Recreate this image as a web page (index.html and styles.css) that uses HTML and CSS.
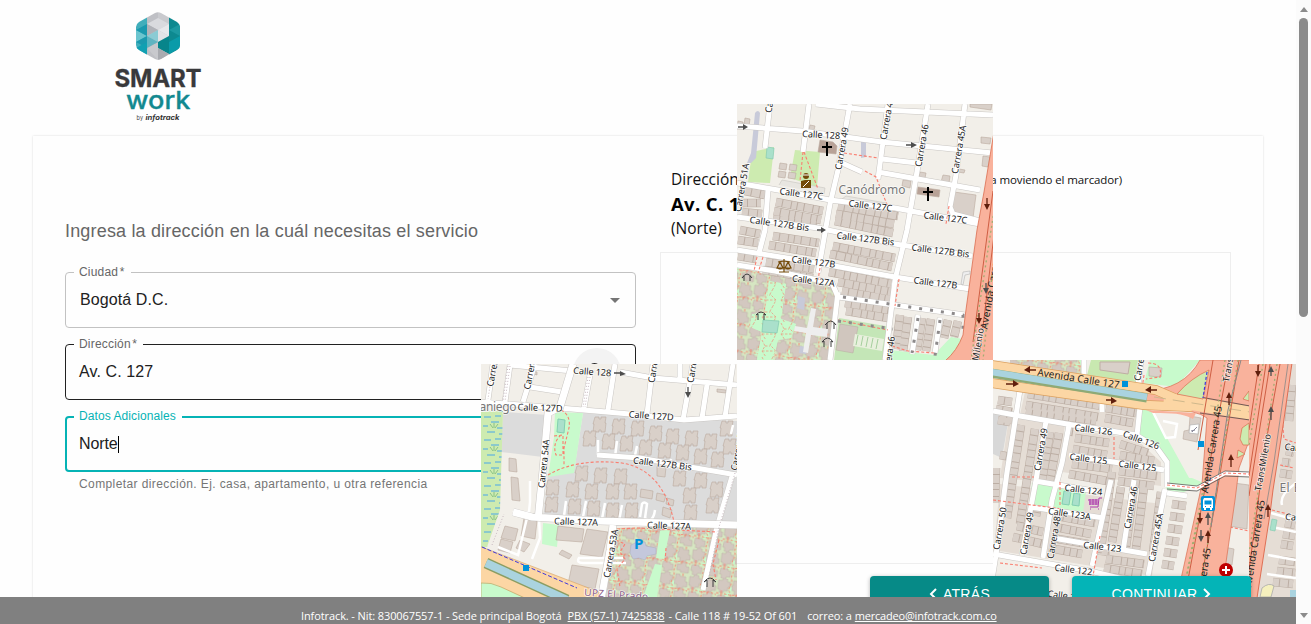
FILE: index.html
```html
<!DOCTYPE html>
<html lang="es">
<head>
<meta charset="utf-8">
<title>Smart Work</title>
<link rel="stylesheet" href="styles.css">
</head>
<body>
<div class="page">
  <header class="header">
    <svg class="logo" width="100" height="124" viewBox="108 0 100 124">
      <defs><clipPath id="hex"><path d="M155 13Q158 11.500 161 13L177 22Q180 24 180 27V45Q180 48 177 50L161 59Q158 60.500 155 59L139 50Q136 48 136 45V27Q136 24 139 22Z"/></clipPath></defs>
      <g clip-path="url(#hex)">
        <path fill="#41aebb" d="M136 10h11v50h-11z"/>
        <path fill="#bfc0c5" d="M147 10h11v50h-11z"/>
        <path fill="#c9cace" d="M158 10h11v50h-11z"/>
        <path fill="#0d8990" d="M169 10h11v50h-11z"/>
        <path fill="#6bc5cf" d="M136 30l11 6-11 6z"/>
        <path fill="#1a99ae" d="M136 30l11-6v12zM136 42l11-6v12z"/>
        <path fill="#d9dade" d="M147 24l11-6v12zM158 18l11 6-11 6z"/>
        <path fill="#e7e8eb" d="M158 30l11-6v12z"/>
        <path fill="#b0b2b8" d="M147 24l11 6-11 6z"/>
        <path fill="#8bcbd4" d="M147 36l11-6v12z"/>
        <path fill="#5fb4c1" d="M147 36l11 6-11 6z"/>
        <path fill="#e2e3e6" d="M158 30l11 6-11 6z"/>
        <path fill="#278f9d" d="M147 48l11-6v12z"/>
        <path fill="#11a0b2" d="M136 48l11-6v14z"/>
        <path fill="#07858b" d="M158 42l11-6v18l-11-6z"/>
        <path fill="#1c99a1" d="M169 30l11-6v12z"/>
        <path fill="#0a9ba9" d="M169 42l11-6v12zM169 42l11 6-11 6z"/>
        <path fill="#c8c9cd" d="M147 48l11-6v18z"/>
        <path fill="#a9abb0" d="M158 48l11 6-11 8z"/>
      </g>
      <text class="logo-smart" x="114.500" y="86.500" textLength="87">SMART</text>
      <text class="logo-work" x="126" y="108.500" textLength="64.500" lengthAdjust="spacingAndGlyphs">work</text>
      <text class="logo-by" x="136.500" y="119.500" textLength="6.500">by</text>
      <text class="logo-info" x="145.500" y="119.500" textLength="34" lengthAdjust="spacingAndGlyphs">infotrack</text>
    </svg>
  </header>

  <main class="card">
    <section class="form">
      <h1 class="form-title">Ingresa la dirección en la cuál necesitas el servicio</h1>
      <div class="field field-city">
        <span class="label">Ciudad <i>*</i></span>
        <span class="value">Bogotá D.C.</span>
        <span class="caret-down"></span>
      </div>
      <div class="field field-address">
        <span class="label">Dirección <i>*</i></span>
        <span class="value">Av. C. 127</span>
        <span class="search"><svg width="24" height="24" viewBox="0 0 24 24"><circle cx="9.500" cy="9.500" r="5.500"/><path d="M14 14l6 6"/></svg></span>
      </div>
      <div class="field field-extra">
        <span class="label">Datos Adicionales</span>
        <span class="value">Norte</span><span class="cursor"></span>
      </div>
      <p class="help">Completar dirección. Ej. casa, apartamento, u otra referencia</p>
    </section>

    <section class="result">
      <div class="summary">
        <div class="found"><span>Dirección</span><small>(Ajusta moviendo el marcador)</small></div>
        <strong>Av. C. 127</strong>
        <span class="extra">(Norte)</span>
      </div>
      <div class="map-box"></div>
      <div class="actions">
        <button class="btn btn-back"><svg width="8" height="12" viewBox="0 0 8 12"><path d="M7 1L2 6l5 5"/></svg><span>ATRÁS</span></button>
        <button class="btn btn-next"><span>CONTINUAR</span><svg width="8" height="12" viewBox="0 0 8 12"><path d="M1 1l5 5-5 5"/></svg></button>
      </div>
    </section>
  </main>

  <svg class="defs" width="0" height="0">
    <defs>
      <pattern id="complex" width="29" height="27" patternUnits="userSpaceOnUse" patternTransform="rotate(7)">
        <path fill="#d6e6c2" d="M0 0h29v27H0z"/>
        <path fill="#d3c8c0" stroke="#bcaea4" stroke-width=".5" d="M1 2h4V0h5v3h3v5h-2v4H7v2H3v-3H1zM16 1h4v2h6v5h2v5h-4v2h-6v-4h-3V6h1zM2 17h7v2h3v6H8v2H3v-4H1zM16 18h4v-2h5v4h3v6h-8v-2h-4z"/>
        <path fill="#c8facc" d="M13 8h2v7h-2zM9 14h4v3H9z"/>
        <path fill="none" stroke="#fa7264" stroke-width=".8" stroke-dasharray="2.500 1.500" d="M14 0v5l-2 5 3 6-2 11M0 15h8l6 1 8-1 7 2M20 15v4M5 12v6M23 0v4"/>
      </pattern>
      <pattern id="garden" width="19" height="17" patternUnits="userSpaceOnUse">
        <path fill="#c8facc" d="M0 0h19v17H0z"/>
        <path fill="none" stroke="#fa7264" stroke-width=".8" stroke-dasharray="2.500 1.500" d="M2 0l3 6-3 5 4 6M13 0l-3 5 6 6-3 6M5 6h5M2 11h14"/>
      </pattern>
      <pattern id="wet" width="23" height="23" patternUnits="userSpaceOnUse">
        <path fill="#cdebb0" d="M0 0h23v23H0z"/>
        <path stroke="#4aa8e8" stroke-width="1" d="M1 3h7M12 2h6M8 8h8M0 12h5M14 14h7M4 18h8M16 20h5"/>
        <path fill="none" stroke="#79b878" stroke-width=".8" d="M10 14l-3-4M11 14V9M12 14l3-4"/>
      </pattern>
      <g id="block"><path class="bld" d="M1 0h4v2h2V0h5l-1 6h1l-1 9H7v-2H5v2H-1l1-8H-1z"/></g>
    </defs>
  </svg>

  <!-- north tile -->
  <svg class="tile tile-n" width="256" height="256" viewBox="737 104 256 256">
    <defs>
      <g id="rows-n">
        <path d="M745 191l20 4M776 202l47 9M774 211l47 9M741 203h20M742 212l20 2M773 219l44 6M838 206l60 10M836 214l58 10M835 221l58 12M740 230l20 4M738 240l20 3M773 236l46 7M769 245l47 8M833 246l62 12M830 254l62 13M738 256l18 3M766 262l48 7M763 270l50 8M829 272l62 12M838 282l53 10M842 291l50 9"/>
        <path d="M845 303l44 7M846 311l42 7M900 315l-4 34M908 317l-5 34M922 318l-5 32M931 319l-5 32M948 320l-4 18M958 321l-4 16"/>
      </g>
      <g id="roads-n">
        <path d="M737 126L802 131 882 142 993 153M816 104L860 109 993 115M770 104L765 148M809 104L803 152M850 104L844 137 838 170 830 204 818 273M888 104L878 179M928 104L919 160 907 230 895 280 885 360M965 104L956 175 950 207 953 214 980 221M737 183L778 190 830 200 895 208 980 224M768 190L765 230 759 253M737 217L818 228 895 244 972 256M737 250L818 263 895 277 970 289M737 265L775 271 832 283 838 297 965 315M838 292L830 360M882 159L917 163M878 172L980 190M842 163L862 172M918 315l-6 39M940 318l-5 35"/>
      </g>
    </defs>
    <path fill="#f2efe9" d="M737 104h256v256H737z"/>
    <path fill="#cdebb0" d="M752 152l22-5-4 36-22-1zM795 150l25 2-3 35-27-9z"/>
    <path fill="#e8e6e1" stroke="#c8c4bf" stroke-width=".6" d="M779 185l3-5 43 8-1 6M842 199l4-3 40 7-1 6"/>
    <path fill="#c8cad9" d="M755 113q3-4 5 0l-4 45-5 5h-4l4-10zM861 142h5v15l-5 1z"/>
    <path fill="#aae0cb" stroke="#7fc8ad" stroke-width=".6" d="M767 147l7 1-1 11-7-1z"/>
    <path fill="url(#complex)" d="M737 268l36 6 60 12 4 10-8 64h-92z"/>
    <path fill="#c8facc" d="M769 281l17 3-5 35 15 5-5 14-13 2-5 20h-16l5-28-12-5 2-13 13-1z"/>
    <path fill="url(#garden)" opacity=".7" d="M769 281l17 3-5 35 15 5-5 14-13 2-5 20h-16l5-28-12-5 2-13 13-1z"/>
    <path fill="#aae0cb" stroke="#80c9af" stroke-width=".7" d="M763 320l16 1-2 12-15-1z"/>
    <path fill="#c8cad9" d="M798 296l7 2-1 12-7-2zM800 346l7 1-1 7-7-1z"/>
    <path fill="#c4e6b7" d="M839 318l52 9-5 33h-52z"/>
    <path fill="#d0c6be" stroke="#b9aaa0" stroke-width=".5" d="M840 324l18 3-5 26-17-3z"/>
    <path fill="#e8f0dd" d="M855 334l29 5-2 12-29-5z"/>
    <path stroke="#a5cf9d" d="M858 335l-2 10M863 336l-2 10M868 337l-2 10M873 338l-2 10M878 339l-2 10"/>
    <path fill="#c8facc" d="M890 350l44 5 17-18 12 2-8 21h-68z"/>
    <path fill="#eee" d="M764 258l-4 15 8 1 3-15zM811 308l5 1-3 18 15 2-1 8-16-2-3 18-5-1 3-19-12-2 1-5 12 2z"/>
    <use href="#rows-n" class="rows-edge"/><use href="#rows-n" class="rows"/>
    <g class="bld">
      <path d="M745 118l5 1-1 7-5-1zM738 121l5 1v7h-6zM810 125l5 1-2 8-5-1zM780 163l7 1-1 6-7-1zM790 164l7 1-1 6-7-1zM779 171l7 1-1 6-7-1zM789 172l7 1-1 6-7-1zM970 104h22l-1 6-21-3zM981 137l10 1-1 6-9-1zM983 156l7 1-2 10-6-1zM920 172l6 1-1 5-6-1zM943 175l7 1-1 7-8-1zM959 169l6 1-1 3-6-1zM903 180l8 1-1 7-8-2zM954 192l22 3-3 23-22-3z"/>
      <path fill="#b8a297" d="M820 140l13 2 4 4-1 8-18-2zM918 187l22 3-1 7-22-3z"/>
    </g>
    <use href="#roads-n" class="road-edge"/><use href="#roads-n" class="road"/>
    <path class="foot" d="M803 152l-3 29M804 152l14 37M844 153l34 5M865 171l11 6 12 30M949 206l-3 18M757 257l-3 14M820 268l-2 12M899 279l-4 27M763 257l-5 16M838 320l50 10M892 346l16 5 26 2"/>
    <path fill="none" stroke="#8d8a8b" stroke-width="3" stroke-dasharray="3 8" d="M843 297l120 18v18M838 321l55 8M918 318l-6 35M940 320l-5 36"/>
    <path class="trunk" d="M995 126l-11 66-7 38-12 87-2 18q-6 16-18 26h50z"/>
    <path fill="none" stroke="#ce5e43" stroke-width="1" d="M993 191L973 342M994 235L979 360"/>
    <path class="median" d="M994 211L971 360M992 275L983 360"/>
    <path fill="#eee" stroke="#aaa" stroke-width=".5" d="M961 284l2-12 7-1v3l-5 1-2 10z"/>
    <g class="oneway"><path d="M738 127h7M906 145h7M817 230h6"/><path class="head" d="M743 124l5 3-5 3zM911 142l6 3-6 3zM821 227l5 3-5 3z"/></g>
    <g class="oneway dark"><path d="M987 198v8M979 313v8"/><path class="head" d="M984 204l3 6 3-6zM976 318l3 6 3-6z"/></g>
    <g class="oneway"><path d="M986 283v8"/><path class="head" d="M983 288l3 6 3-6z"/></g>
    <path stroke="#000" stroke-width="2" d="M827 142v14M822 147h10M928 187v14M923 192h10"/>
    <g fill="#734a08"><circle cx="806" cy="176" r="3"/><path d="M801 181l4-1h6v8h-10z"/></g><path stroke="#fff" stroke-width="1" d="M803 187l6-6M803 175h6"/>
    <path fill="none" stroke="#734a08" stroke-width="1.200" d="M784 259v13M779 272h10M778 262l6-1 6 1M777 268l3-6 3 6zM785 268l3-6 3 6z"/><path fill="#734a08" d="M777 268h6q-3 3-6 0zM785 268h6q-3 3-6 0z"/>
    <path class="gate" d="M744 281v-5l-2 2q5-8 10 0l-2-2v5M758 320v-6l-2 1q5-6 10 0l-2-1v6M827 329v-6l-2 2q6-8 11 0l-2-2v6M824 347v-6l-2 1q6-8 11 0l-2-1v6"/>
    <g class="labels">
      <text transform="translate(821 138) rotate(3)" textLength="38">Calle 128</text>
      <text transform="translate(845 149) rotate(-80)" textLength="43">Carrera 49</text>
      <text transform="translate(890 119) rotate(-80)" textLength="43">Carrera 47</text>
      <text transform="translate(775 92) rotate(-80)" textLength="43">Carrera 50</text>
      <text transform="translate(925 146) rotate(-80)" textLength="43">Carrera 46</text>
      <text transform="translate(962 150) rotate(-80)" textLength="49">Carrera 45A</text>
      <text transform="translate(745 188) rotate(-80)" textLength="49">Carrera 51A</text>
      <text transform="translate(801 197) rotate(7)" textLength="44">Calle 127C</text>
      <text transform="translate(870 209) rotate(7)" textLength="44">Calle 127C</text>
      <text transform="translate(945 221) rotate(7)" textLength="44">Calle 127C</text>
      <text transform="translate(779 227) rotate(8)" textLength="60">Calle 127B Bis</text>
      <text transform="translate(865 242) rotate(7)" textLength="58">Calle 127B Bis</text>
      <text transform="translate(940 254) rotate(7)" textLength="58">Calle 127B Bis</text>
      <text transform="translate(813 265) rotate(7)" textLength="44">Calle 127B</text>
      <text transform="translate(935 286) rotate(7)" textLength="44">Calle 127B</text>
      <text transform="translate(813 284) rotate(7)" textLength="43">Calle 127A</text>
      <text transform="translate(892 358) rotate(-82)" textLength="43">Carrera 46</text>
      <text transform="translate(979 357) rotate(-80)" textLength="58">TransMilenio</text>
      <text class="avenue" transform="translate(994 291) rotate(-80)" textLength="78">Avenida Carrera</text>
      <text class="place" x="872" y="194" textLength="67">Canódromo</text>
    </g>
  </svg>

  <!-- west tile -->
  <svg class="tile tile-w" width="256" height="256" viewBox="481 364 256 256">
    <defs>
      <g id="roads-w">
        <path d="M510 365L572 371M620 372L653 378 737 385M530 387L562 392M481 402L560 408 630 414 684 420 737 416M493 364L488 400M510 365L505 402M535 364L523 402M590 375L584 408M615 364L608 410M653 364L647 414M693 364L683 420M707 385L702 418M733 364L725 417M680 364v14M597 455L640 458 690 467 737 475M733 473L717 527 703 590"/>
      </g>
      <g id="roads-w2">
        <path d="M573 364L560 407 548 413 543 470 538 520M513 512L532 517 600 521 700 524 737 525M613 525L610 550 601 600"/>
      </g>
    </defs>
    <path fill="#f2efe9" d="M481 364h256v256H481z"/>
    <path fill="#dcdcdc" d="M503 412l45 3-5 42-42-5zM583 413l154 8v103l-194-7 5-44 27-8z"/>
    <path fill="#c8facc" d="M555 412l28 1-9 60-26 4 6-40zM543 523l16 2-2 22-15-3z"/>
    <path fill="url(#wet)" d="M481 412l22-1-3 99-13 37-6 1z"/>
    <path fill="#aae0cb" stroke="#83cfb1" d="M558 419l7 1-1 13-7-1z"/>
    <path fill="url(#complex)" d="M615 528l122-3v72H606z"/>
    <path fill="#c8facc" d="M660 531l10-1-6 29-8-1zM655 564l7 1-5 32h-14z"/>
    <path fill="#c4c8dc" stroke="#a9aebf" stroke-width=".5" d="M631 545l6-3h8l1 4 10 2v6l-9 2-2 4-6-2-6 1-3-6z"/>
    <g>
      <use href="#block" x="594" y="417"/><use href="#block" x="613" y="419"/><use href="#block" x="632" y="421"/><use href="#block" x="650" y="426"/><use href="#block" x="667" y="429"/><use href="#block" x="686" y="431"/><use href="#block" x="705" y="434"/><use href="#block" x="721" y="421"/>
      <use href="#block" x="584" y="431"/><use href="#block" x="603" y="434"/><use href="#block" x="621" y="436"/><use href="#block" x="640" y="440"/><use href="#block" x="659" y="443"/><use href="#block" x="677" y="445"/><use href="#block" x="695" y="449"/><use href="#block" x="712" y="452"/><use href="#block" x="724" y="439"/>
      <use href="#block" x="576" y="466"/><use href="#block" x="595" y="468"/><use href="#block" x="615" y="469"/><use href="#block" x="547" y="480"/><use href="#block" x="567" y="482"/><use href="#block" x="586" y="484"/><use href="#block" x="607" y="484"/><use href="#block" x="625" y="484"/><use href="#block" x="546" y="497"/><use href="#block" x="569" y="499"/><use href="#block" x="588" y="501"/><use href="#block" x="607" y="503"/><use href="#block" x="626" y="503"/>
      <use href="#block" x="674" y="471"/><use href="#block" x="695" y="473"/><use href="#block" x="711" y="482"/><use href="#block" x="684" y="488"/><use href="#block" x="707" y="498"/><use href="#block" x="685" y="505"/>
    </g>
    <path class="bld" d="M641 489l12 2-1 8-12-2zM657 493l9 2-2 7-8-2zM667 498l7 2-1 6-7-2zM663 507l9 3-2 8-8-3zM657 466l9 1-1 10-8-1zM509 458l7 1 1 13-8-1zM511 477l7 1 2 23-8-1zM524 518l13 3-2 18-14-3zM505 526l13 3-3 12-14-3zM501 539l12 3-3 11-12-3zM520 540l10 4-6 8-8-4zM558 526l26 3-2 13-26-2zM587 529l21 3-6 25-22-3zM562 550l10 5-3 4-10-5zM572 565l27 4-4 20-27-5zM717 389l9 1v3l-9-1zM534 371l3 1v3l-3-1z"/>
    <path class="lane" d="M566 501l-2 15M586 501l-3 16M605 503l-3 16M622 505l-3 16M640 517l2-13q2-3 5 0l-2 14q8 6 10-8M598 440v15M617 441l-2 16M637 446l-3 14M671 459l-2 9M733 425l-2 9M513 511l4 2 12-1 1-10v-21M527 518l-9 37-20-8M515 513l9 1M626 563h-43q-7 0-4-5h44"/>
    <path class="lane" stroke-width="4" d="M539 518l1 20-8 21"/>
    <use href="#roads-w" class="road-edge"/><use href="#roads-w" class="road"/>
    <use href="#roads-w2" class="wide-edge"/><use href="#roads-w2" class="wide"/>
    <path fill="none" stroke="#c7b8bf" stroke-width="1" stroke-dasharray="1 2" d="M510 366l-5 35M508 366l-5 35M493 366l-5 33M590 377l-5 30M588 377l-5 30M492 545l12-31M735 473l-16 54-12 60"/>
    <path class="foot" d="M561 410q10 5 8 18l-5 20v18M554 436l9-1v20h-7q-4-12 5-20M548 475q29-17 74-12 41 7 52 59M617 529l20-1 80 4M616 540l9 4-5 8 5 7-8 10 3 18M666 548l-1 15M719 540l-6 24 3 16"/>
    <path fill="#fcd6a4" stroke="#d3a064" stroke-width=".6" d="M479 546l120 46v9H479z"/>
    <path fill="none" stroke="#8b9d62" stroke-width="11" d="M486 563l81 37"/><path fill="none" stroke="#aad3df" stroke-width="8" d="M486 563l81 37"/>
    <path fill="#c8facc" stroke="#c2a162" stroke-width=".7" d="M481 583q10-1 20 4l26 12h-46z"/>
    <path fill="none" stroke="#4038dc" stroke-width="1" stroke-dasharray="4 2" d="M482 547l95 41"/>
    <path fill="#0092da" d="M523 565h6v6h-6z"/>
    <g class="oneway"><path d="M614 373h8M688 387v8"/><path class="head" d="M620 371l6 3-6 2zM685 392l3 6 3-6z"/></g>
    <path class="gate" d="M707 587v-7l-3 2q6-8 12 0l-3-2v7"/>
    <text class="parking" x="634" y="549">P</text>
    <g class="labels">
      <text transform="translate(592 375) rotate(4)" textLength="38">Calle 128</text>
      <text transform="translate(497 366) rotate(-79)" textLength="43">Carrera 56</text>
      <text transform="translate(534 369) rotate(-79)" textLength="43">Carrera 55</text>
      <text transform="translate(658 362) rotate(-80)" textLength="43">Carrera 53</text>
      <text transform="translate(697 362) rotate(-80)" textLength="43">Carrera 52</text>
      <text transform="translate(540 411) rotate(2)" textLength="45">Calle 127D</text>
      <text transform="translate(651 419) rotate(4)" textLength="45">Calle 127D</text>
      <text transform="translate(662 467) rotate(7)" textLength="59">Calle 127B Bis</text>
      <text transform="translate(547 464) rotate(-84)" textLength="49">Carrera 54A</text>
      <text transform="translate(576 525) rotate(2)" textLength="44">Calle 127A</text>
      <text transform="translate(669 529) rotate(2)" textLength="44">Calle 127A</text>
      <text transform="translate(614 554) rotate(-80)" textLength="49">Carrera 53A</text>
      <text transform="translate(741 450) rotate(-79)" textLength="43">Carrera 52</text>
      <text class="place" x="498" y="411" textLength="37">aniego</text>
      <text class="upz" transform="translate(616 598) rotate(4)" textLength="64">UPZ El Prado</text>
    </g>
  </svg>

  <!-- east tile -->
  <svg class="tile tile-e" width="256" height="256" viewBox="993 360 256 256">
    <defs>
      <g id="rows-e">
        <path d="M1028 394l74 12M1026 405l72 12M1106 408l30 5M1105 418l28 5M1026 411l70 10"/>
        <path d="M1021 425l-14 93M1035 429l-15 95M1050 432l-14 84M1059 433l-10 52M1066 431l7 1"/>
        <path d="M1075 438l34 5M1073 449l34 6M1120 444l28 9M1120 455l34 6M1072 464l40 5M1069 474l38 7M1119 471l38 5M1118 481l36 5"/>
        <path d="M1000 418l12 2M1000 455l11 2M996 468l-1 35M998 400l14 2M996 409l16 3M998 420l12 2M1057 516l38 7M1055 527l36 7M1052 538l36 6M1049 548l33 6M1112 472l-12 83M1121 487l-9 55M1134 487l-8 60M1144 487l-8 62M1161 492l-8 60M1106 559l38 5M1104 568l38 6M1017 526l26 6M1013 537l30 7M1102 551l8 1"/>
        <path d="M1172 504l14 2M1170 516l14 2M1168 528l14 2M1166 540l13 2M1164 552l13 2M1162 564l12 2M1001 372l18 2M1000 380l10 2"/>
      </g>
      <g id="roads-e">
        <path d="M1020 390L1007 472 996 555 992 580M993 411L1020 416 1073 425 1136 435 1157 448 1167 462 1167 487M1140 407L1137 435M1102 403v9M1046 421L1036 480 1022 555M1069 425L1062 463 1052 500 1043 558M1069 455L1164 470M1035 481L1100 492M1030 507L1104 518M1053 538L1147 554M1111 480L1102 520 1092 566M1134 480L1123 551M1165 489L1148 576M993 554L1090 571 1140 583M1167 493l20 3M1084 360v16M1141 362l-3 24"/>
      </g>
    </defs>
    <path fill="#f2efe9" d="M993 360h256v256H993z"/>
    <path fill="#e5ddd5" d="M1026 387l112 19v28L1020 415zM1009 417l56 8-8 58-57-5zM1071 430l64 8 26 24v24l-99-14zM1000 484l162 20-10 72-158-26z"/>
    <path fill="#d8d8d8" d="M993 413l16 4-7 41-9-4z"/>
    <path fill="url(#complex)" d="M1010 360h72v14l-72-8z"/>
    <path fill="#c8e8b0" d="M1091 360h50l-4 22-50-7z"/>
    <path fill="#d9d0c9" stroke="#bfaea4" d="M1100 362h30l-2 12-28-4z"/>
    <path fill="#c8facc" d="M1150 360h50l-24 27-32-4zM1142 408l9 1 42 76-25 6q2-34-14-46l-16-10zM1168 478h24l12 5-20 9-18-1z"/>
    <path class="bld" d="M1149 367l13 1-1 9-12-1z"/>
    <use href="#rows-e" class="rows-edge"/><use href="#rows-e" class="rows"/>
    <path fill="#c8facc" d="M1032 483l54 9-3 20-53-8z"/>
    <path fill="#aae0cb" stroke="#83cfb1" d="M1064 491l7 1-2 13-7-1zM1074 493l6 1-1 12-7-1z"/>
    <use href="#roads-e" class="road-edge"/><use href="#roads-e" class="road"/>
    <path class="bld" d="M1190 416l11 2-4 24-14-3 1-8 5-1zM1234 483l15 2-2 44-18-3zM1224 547l10 2-2 16-11-2z"/>
    <path class="lane" d="M1152 410l14 28 9-1 2-13-14-3"/>
    <path fill="#fff" stroke="#aaa" stroke-width=".6" d="M1190 425l9-1-1 10-9-1z"/><path stroke="#889" stroke-width="1" d="M1192 432l5-5M1191 431l4-1"/>
    <path class="foot" d="M1114 437v22M1060 482v24M1100 536l-7 40M993 500l70 9M1012 477h22M1000 563l42 5M1144 375l-2 14M1148 363q15 0 12 14l-14 2M1225 526l24 5"/>
    <!-- avenue and interchange -->
    <path fill="#f9b29c" stroke="#da6d50" stroke-width=".7" d="M1200 360h51v45l-2 36-10 27-4 32-14 97h-44l25-113 5-66q-10-8-40-9l-28-3 5-15q40-1 56-31z"/>
    <path fill="none" stroke="#dba05f" stroke-width="10" d="M991 365l165 25 25 11M991 383l153 22 48 2"/>
    <path fill="none" stroke="#fcd6a4" stroke-width="8.500" d="M991 365l165 25 25 11M991 383l153 22 48 2"/>
    <path fill="none" stroke="#8eaa76" stroke-width="9" d="M991 373l156 25"/>
    <path fill="none" stroke="#aad3df" stroke-width="6.500" d="M991 372l156 25"/>
    <path fill="none" stroke="#fcd6a4" stroke-width="13" d="M1164 399l86 14"/><path fill="none" stroke="#333" stroke-width=".7" d="M1200 397l50 9M1200 413l50 7"/>
    <path fill="none" stroke="#cfb88c" stroke-dasharray="12 7" stroke-width="1" d="M1154 397l96 15"/>
    <path fill="#f9b29c" d="M1146 410l50 3-3 6q-10-7-40-6z"/>
    <path fill="#cdebb0" stroke="#db6b50" stroke-width=".7" d="M1209 370q-18 8-32 24l26 5zM1249 391l-6 8 6 2zM1249 423l-7 5-2 11 3 6h6zM1238 450l7 4-8 4z"/>
    <path fill="none" stroke="#4038dc" stroke-width="1.200" stroke-dasharray="3 2" d="M1207 372l-4 26"/>
    <path fill="none" stroke="#ce5e43" stroke-width="1" d="M1229 360l-17 91-27 145M1239 360l-25 150-16 87M1213 360l-15 90"/>
    <path class="median" d="M1225 360l-12 78-29 150M1238 360l-24 145-15 91M1204 493l-17 83"/>
    <path fill="none" stroke="#888" stroke-width="1" d="M1241 360l-13 50-17 117"/>
    <path fill="none" stroke="#fff" stroke-width="4" d="M1167 485l30 3 28-15 24 1"/><path class="foot" d="M1167 485l30 3 28-15 24 1"/><path fill="none" stroke="#444" stroke-width=".7" d="M1167 483l30 3 28-15 24 1M1167 489l30 2 28-15 24 1"/>
    <path fill="#0092da" d="M1122 381h6v6h-6zM1198 441h6v6h-6z"/>
    <g class="oneway dark"><path d="M1027 370h9M1006 384h8M1106 400h8M1148 390h9M1229 395v10M1231 457v10M1200 513v7M1208 533v10"/><path class="head" d="M1030 366l-6 4 6 3zM1013 380l6 4-6 3zM1111 397l6 4-6 3zM1151 386l-6 4 6 3zM1226 398l3-6 3 6zM1228 460l3-6 3 6zM1197 518l3 6 3-6zM1205 536l3-6 3 6z"/></g>
    <g class="oneway"><path d="M1208 515v10M1201 530v8"/><path class="head" d="M1205 518l3-6 3 6zM1198 536l3 6 3-6z"/></g>
    <rect x="1201" y="496" width="14" height="15" rx="2" fill="#0092da"/><path fill="#fff" d="M1204 498h8l1 2v8h-1v2h-2v-2h-4v2h-2v-2h-1v-8z"/><path fill="#0092da" d="M1204.500 500.500h7v4h-7zM1205 506h1v1h-1zM1210 506h1v1h-1z"/>
    <path fill="none" stroke="#ac39ac" stroke-width="1" d="M1102 498h-3l-1 9h-8M1088 500h10M1089 502h9M1089 504h9M1090 499v6M1093 499v6M1096 499v6M1090 509h1M1098 509h1"/>
    <circle cx="1226" cy="570" r="7" fill="#bf0000"/><path stroke="#fff" stroke-width="2" d="M1226 566v8M1222 570h8"/>
    <g class="labels">
      <text class="avenue" transform="translate(1078 382) rotate(9)" textLength="83">Avenida Calle 127</text>
      <text transform="translate(1144 360) rotate(-80)" textLength="43">Carrera 46</text>
      <text transform="translate(1093 433) rotate(7)" textLength="38">Calle 126</text>
      <text transform="translate(1140 443) rotate(20)" textLength="38">Calle 126</text>
      <text transform="translate(1088 462) rotate(7)" textLength="38">Calle 125</text>
      <text transform="translate(1137 469) rotate(7)" textLength="38">Calle 125</text>
      <text transform="translate(1083 493) rotate(7)" textLength="38">Calle 124</text>
      <text transform="translate(1069 517) rotate(8)" textLength="43">Calle 123A</text>
      <text transform="translate(1102 550) rotate(6)" textLength="38">Calle 123</text>
      <text transform="translate(1073 573) rotate(7)" textLength="38">Calle 122</text>
      <text transform="translate(1066 599) rotate(7)" textLength="38">Calle 121</text>
      <text transform="translate(1044 450) rotate(-80)" textLength="43">Carrera 49</text>
      <text transform="translate(1003 529) rotate(-80)" textLength="43">Carrera 50</text>
      <text transform="translate(1030 534) rotate(-80)" textLength="43">Carrera 49</text>
      <text transform="translate(1057 538) rotate(-80)" textLength="43">Carrera 48</text>
      <text transform="translate(1134 508) rotate(-80)" textLength="43">Carrera 46</text>
      <text transform="translate(1159 538) rotate(-80)" textLength="49">Carrera 45A</text>
      <text class="avenue" transform="translate(1215 450) rotate(-81)" textLength="88">Avenida Carrera 45</text>
      <text class="avenue" transform="translate(1204 592) rotate(-81)" textLength="88">Avenida Carrera 45</text>
      <text transform="translate(1234 354) rotate(-80)" textLength="58">TransMilenio</text>
    </g>
  </svg>

  <!-- far east tile -->
  <svg class="tile tile-fe" width="47" height="256" viewBox="1249 364 47 256">
    <defs>
      <g id="rows-fe"><path d="M1292 385l-3 36M1286 451l8 2M1282 462l8 1M1280 473l12 2M1285 523l10 2M1283 534l12 2M1281 544l12 2M1279 560l16 2M1277 571l18 2M1273 582l20 2"/></g>
    </defs>
    <path fill="#e5ddd5" d="M1249 364h47v256h-47z"/>
    <use href="#rows-fe" class="rows-edge"/><use href="#rows-fe" class="rows"/>
    <path class="lane" d="M1290 364l-9 65M1271 513l25 7M1272 527l24 5M1268 555l28 5M1267 574l29 4M1282 505q-3-10 14-22"/>
    <path class="foot" d="M1281 405l3 34 12 4M1272 510l20 5M1280 465l14 3"/>
    <path fill="#f9b29c" stroke="#d9593c" stroke-width=".8" d="M1248 363h44l-9 63-10 64-3 24-13 84h-9z"/>
    <path fill="none" stroke="#ce5e43" stroke-width="1" d="M1259 364l-10 66M1266 364l-17 112M1270 364l-21 132M1280 364l-14 78-17 128"/>
    <path class="median" d="M1263 364l-14 81M1277 364l-28 190M1261 505l-10 70"/>
    <path fill="none" stroke="#888" stroke-width=".8" d="M1288 364l-14 98-10 57"/>
    <path fill="#aae0cb" stroke="#80c9af" stroke-width=".6" d="M1272 519l5 1-2 11-5-1z"/>
    <path fill="#f5f0bd" stroke="#aaa" stroke-width=".8" d="M1260 597l2-9q7-6 12-2l-3 11z"/>
    <path fill="#aad3df" d="M1290 590h6v8h-6z"/>
    <g class="oneway"><path d="M1271 408v12M1271 368v8"/><path class="head" d="M1268 412l3-6 3 6zM1268 372l3-6 3 6z"/></g>
    <g class="oneway dark"><path d="M1258 365v8M1268 507v10"/><path class="head" d="M1255 371l3 6 3-6zM1265 510l3-6 3 6z"/></g>
    <g class="labels">
      <text transform="translate(1266 463) rotate(-80)" textLength="58">TransMilenio</text>
      <text class="avenue" transform="translate(1258 544) rotate(-81)" textLength="88">Avenida Carrera 45</text>
      <text transform="translate(1303 452) rotate(7)" textLength="38">Calle 125</text>
      <text transform="translate(1304 521) rotate(3)" textLength="38">Calle 123</text>
      <text class="place" x="1304" y="492" textLength="49">El Batán</text>
    </g>
  </svg>

  <footer class="footer"><p><span>Infotrack. - Nit: 830067557-1 - Sede principal Bogotá</span><u class="phone">PBX (57-1) 7425838</u><span>- Calle 118 # 19-52 Of 601</span><span class="mail">correo: a</span><u class="address">mercadeo@infotrack.com.co</u></p></footer>
</div>
<aside class="scrollbar"><span class="arrow-up"></span><span class="thumb"></span><span class="arrow-down"></span></aside>
</body>
</html>
```
FILE: styles.css
```css
* { box-sizing: border-box; }
body {
  margin: 0;
  height: 624px;
  display: flex;
  overflow: hidden;
  background: #fefefe;
  font-family: "Liberation Sans", Arial, sans-serif;
}
.page { position: relative; width: 1296px; height: 624px; overflow: hidden; }
.header { height: 136px; padding-left: 108px; }
.logo { display: block; }
.logo-smart { font: 700 24px Inter, sans-serif; fill: #39393b; stroke: #39393b; stroke-width: .3px; }
.logo-work { font: 500 24.5px Inter, sans-serif; fill: #128990; stroke: #128990; stroke-width: .3px; }
.logo-by { font: 5.5px Inter, sans-serif; fill: #444; }
.logo-info { font: italic 700 7px Inter, sans-serif; fill: #333; }

.card {
  display: grid;
  grid-template-columns: 571px 571px;
  gap: 24px;
  width: 1230px;
  height: 600px;
  margin-left: 33px;
  padding: 0 32px;
  background: #fefefe;
  box-shadow: 0 0 2px rgba(0, 0, 0, .15);
}
.form { padding-top: 85px; }
.form-title { margin: 0 0 30px; font-size: 18px; line-height: 21px; font-weight: 400; color: #666; letter-spacing: .17px; white-space: nowrap; }
.field {
  position: relative;
  display: flex;
  align-items: center;
  height: 56px;
  margin-bottom: 16px;
  padding-left: 14px;
  border: 1px solid #c2c2c2;
  border-radius: 4px;
}
.value { font-size: 16px; color: #212121; letter-spacing: .1px; }
.label {
  position: absolute;
  top: -9px;
  left: 8px;
  padding: 0 6px 0 5px;
  background: #fefefe;
  font-size: 12px;
  line-height: 16px;
  letter-spacing: .2px;
  color: #666;
  white-space: nowrap;
}
.label i { font-style: normal; margin-left: -2px; }
.caret-down { margin: 0 15px 0 auto; border: 5px solid transparent; border-top-color: #757575; border-bottom: 0; }
.field-address { border-color: #212121; padding-left: 13px; }
.search { display: grid; place-items: center; width: 48px; height: 48px; margin: 0 14px 0 auto; border-radius: 50%; background: #f3f3f3; }
.search svg { fill: none; stroke: #222; stroke-width: 2; }
.field-extra { border: 2px solid #05b3b5; padding-left: 12px; margin-bottom: 4px; }
.field-extra .label { color: #05b3b5; top: -10px; left: 7px; letter-spacing: .08px; }
.field-extra .value { letter-spacing: -.1px; }
.cursor { width: 1px; height: 17px; background: #000; }
.help { margin: 0 0 0 14px; font-size: 12px; line-height: 16px; color: #757575; letter-spacing: .4px; }

.result { padding-top: 31px; font-family: "Open Sans", "Noto Sans", sans-serif; color: #111; }
.summary { height: 85px; padding-left: 11px; font-size: 15.5px; line-height: 25px; }
.found { display: flex; justify-content: space-between; width: 451px; white-space: nowrap; }
.found small { font-size: 11.5px; letter-spacing: -.1px; }
.summary strong { display: block; font-size: 18.5px; line-height: 24px; letter-spacing: .35px; color: #000; }
.extra { display: block; }
.map-box { height: 312px; border: 1px solid #eee; }
.actions { position: relative; z-index: 2; display: flex; justify-content: flex-end; gap: 23px; height: 36px; margin: 12px -20px 0 0; }
.btn {
  display: flex;
  align-items: center;
  justify-content: center;
  gap: 6px;
  width: 179px;
  height: 36px;
  padding: 0;
  border: 0;
  border-radius: 4px;
  background: #068a87;
  color: #fff;
  font: 14px "Liberation Sans", sans-serif;
  letter-spacing: .3px;
  box-shadow: 0 1px 4px rgba(0, 0, 0, .3);
}
.btn svg { fill: none; stroke: #fff; stroke-width: 2; }
.btn-next { background: #04b4b7; }

.defs { position: absolute; }
.tile { position: absolute; z-index: 1; }
.tile-n { left: 737px; top: 104px; }
.tile-w { left: 481px; top: 364px; }
.tile-e { left: 993px; top: 360px; }
.tile-fe { left: 1249px; top: 364px; }
.rows-edge { fill: none; stroke: #bcaea4; stroke-width: 8.5; }
.rows { fill: none; stroke: #d9d0c9; stroke-width: 7.5; stroke-dasharray: 6 1 8 1 5 1; }
.bld { fill: #d9d0c9; stroke: #bba99e; stroke-width: .6; }
.road-edge { fill: none; stroke: #c9c6c3; stroke-width: 6; }
.road { fill: none; stroke: #fff; stroke-width: 5; }
.wide-edge { fill: none; stroke: #c9c6c3; stroke-width: 8; }
.wide { fill: none; stroke: #fff; stroke-width: 7; }
.lane { fill: none; stroke: #fff; stroke-width: 2.5; }
.foot { fill: none; stroke: #fa7e70; stroke-width: 1.1; stroke-dasharray: 3 2; }
.trunk { fill: #f9b29c; stroke: #da6d50; stroke-width: .8; }
.median { fill: none; stroke: #a1ad70; stroke-width: 1.3; stroke-dasharray: 2 3; }
.oneway { fill: none; stroke: #4d4d4d; stroke-width: 1.3; }
.oneway .head { fill: #4d4d4d; stroke: none; }
.dark { stroke: #601f0d; }
.dark .head { fill: #601f0d; }
.gate { fill: none; stroke: #3f3f3f; stroke-width: 1; }
.parking { font: 700 15px "Noto Sans", sans-serif; fill: #0092da; }
.labels { font: 9.2px "Noto Sans", sans-serif; fill: #222; text-anchor: middle; paint-order: stroke; stroke: rgba(255, 255, 255, .75); stroke-width: 1.6px; stroke-linejoin: round; }
.labels .place { font-size: 12px; fill: #777; }
.labels .upz { font-size: 10px; fill: #8b608b; }
.labels .avenue { font-size: 10px; stroke: none; }

.footer {
  position: absolute;
  z-index: 3;
  left: 0;
  top: 597px;
  width: 1296px;
  height: 27px;
  padding-top: 11px;
  background: #808080;
  color: #fff;
  font: 11px/16px "Open Sans", "Noto Sans", sans-serif;
}
.footer p { display: flex; width: 694px; margin: 0 auto; white-space: nowrap; letter-spacing: -.1px; }
.footer .phone { margin: 0 4px 0 6px; }
.footer .mail { margin: 0 3px 0 10px; }
.footer .address { letter-spacing: -.2px; }
.scrollbar { display: flex; flex-direction: column; align-items: center; width: 15px; height: 624px; padding: 7px 0 6px; background: #fbfbfb; }
.arrow-up { border: 4px solid transparent; border-bottom: 5px solid #8b8b8b; border-top: 0; }
.thumb { width: 9px; height: 299px; margin-top: 6px; border-radius: 5px; background: #8b8b8b; }
.arrow-down { margin-top: auto; border: 4px solid transparent; border-top: 5px solid #8b8b8b; border-bottom: 0; }
```
